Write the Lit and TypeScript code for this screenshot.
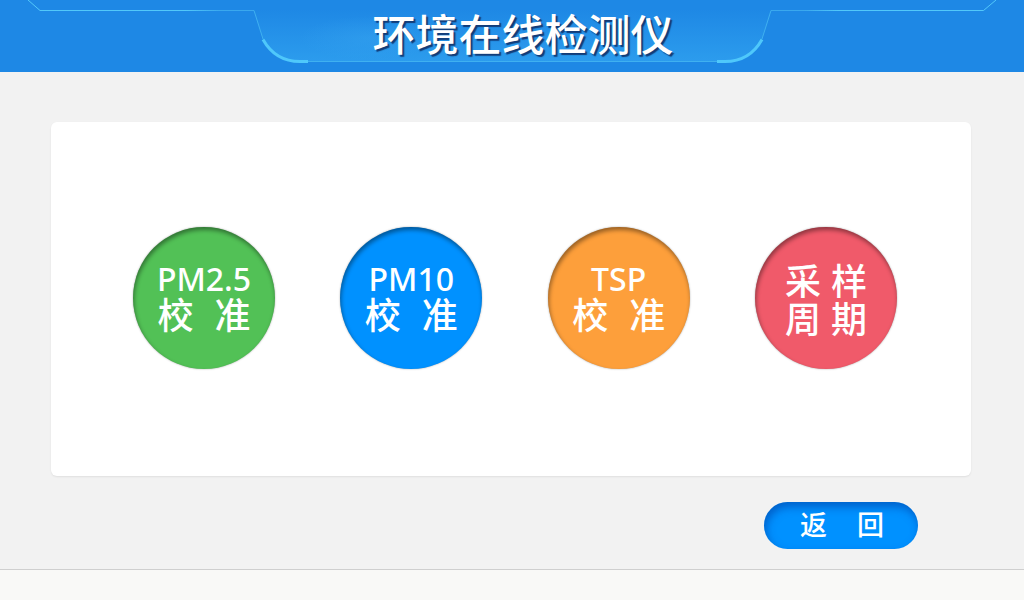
import { LitElement, html, css } from "lit";
import { customElement, property } from "lit/decorators.js";

interface Action {
  tone: string;
  label?: string;
  rows: string[];
}

const ACTIONS: Action[] = [
  { tone: "green", label: "PM2.5", rows: ["校准"] },
  { tone: "blue", label: "PM10", rows: ["校准"] },
  { tone: "orange", label: "TSP", rows: ["校准"] },
  { tone: "red", rows: ["采样", "周期"] },
];

@customElement("header-banner")
class HeaderBanner extends LitElement {
  static styles = css`
    :host {
      display: block;
    }
    .banner {
      display: grid;
      height: 72px;
      background: #1e88e5;
      overflow: hidden;
    }
    .frame,
    .title {
      grid-area: 1 / 1;
    }
    .frame {
      width: 100%;
      height: 72px;
    }
    .title {
      margin: 0;
      padding-left: 22px;
      justify-self: center;
      font-size: 43px;
      line-height: 64px;
      font-weight: 500;
      color: #fff;
      text-shadow: 2px 2px 1px #123c78;
      white-space: nowrap;
    }
  `;

  render() {
    return html`
      <header class="banner">
        <svg class="frame" viewBox="0 0 1024 72" preserveAspectRatio="xMidYMin slice" fill="none" aria-hidden="true">
          <defs>
            <linearGradient id="fill" x1="0" y1="0" x2="0" y2="1">
              <stop offset="0.15" stop-color="#1e88e5" />
              <stop offset="1" stop-color="#2c9ced" />
            </linearGradient>
            <radialGradient id="glow">
              <stop offset="0" stop-color="#38a6f0" stop-opacity="0.4" />
              <stop offset="1" stop-color="#38a6f0" stop-opacity="0" />
            </radialGradient>
            <linearGradient id="left" gradientUnits="userSpaceOnUse" x1="28" y1="0" x2="254" y2="0">
              <stop offset="0.7" stop-color="#52c8fa" />
              <stop offset="0.85" stop-color="#3aa8ee" />
            </linearGradient>
            <linearGradient id="right" gradientUnits="userSpaceOnUse" x1="996" y1="0" x2="771" y2="0">
              <stop offset="0.7" stop-color="#52c8fa" />
              <stop offset="0.85" stop-color="#3aa8ee" />
            </linearGradient>
          </defs>
          <path fill="url(#fill)" d="M251 0L254 10.500L263 39C270 52 282 61.500 300 61.500H725C743 61.500 755 52 762 39L771 10.500L774 0Z" />
          <ellipse cx="370" cy="38" rx="70" ry="22" fill="url(#glow)" />
          <path stroke="url(#left)" d="M28 0L40 10.500H254" />
          <path stroke="url(#right)" d="M996 0L983.500 10.500H771" />
          <path stroke="#3fb0f0" d="M254 10.500L263 39M308 61.500H717M762 39L771 10.500" />
          <path stroke="#4fc8fb" stroke-width="3" d="M263 39.500C270 52 282 61.500 300 61.500H308M717 61.500H725C743 61.500 755 52 762 39.500" />
        </svg>
        <h1 class="title">环境在线检测仪</h1>
      </header>
    `;
  }
}

@customElement("round-button")
class RoundButton extends LitElement {
  @property({ attribute: false }) action!: Action;

  static styles = css`
    :host {
      display: block;
    }
    .round {
      display: flex;
      flex-direction: column;
      align-items: center;
      justify-content: center;
      width: 142px;
      height: 142px;
      padding: 0;
      border: 0;
      border-radius: 50%;
      color: #fff;
      font-family: "Noto Sans", "Noto Sans CJK SC", sans-serif;
      font-weight: 500;
      cursor: pointer;
      box-shadow: inset 1px 3px 4px rgba(0, 0, 0, 0.4), 0 0 2px rgba(0, 0, 0, 0.35);
    }
    .green {
      background: #52c156;
    }
    .blue {
      background: #0091ff;
    }
    .orange {
      background: #fd9f3b;
    }
    .red {
      background: #f05a6a;
    }
    .label {
      font-size: 32px;
      line-height: 30px;
    }
    .row {
      display: flex;
      gap: 21px;
      font-family: "Noto Sans CJK SC", sans-serif;
      font-size: 36px;
      line-height: 38px;
      font-weight: 500;
    }
    .red .row {
      gap: 10px;
    }
  `;

  render() {
    const { tone, label, rows } = this.action;
    return html`
      <button class="round ${tone}" type="button">
        ${label ? html`<span class="label">${label}</span>` : null}
        ${rows.map(
          (row) => html`<span class="row">${[...row].map((c) => html`<span>${c}</span>`)}</span>`
        )}
      </button>
    `;
  }
}

@customElement("app-root")
class AppRoot extends LitElement {
  static styles = css`
    :host {
      display: flex;
      flex-direction: column;
      min-height: 100vh;
      background: #f2f2f2;
      font-family: "Noto Sans CJK SC", sans-serif;
    }
    .main {
      flex: 1;
      display: flex;
      flex-direction: column;
      padding: 50px 53px 20px 51px;
    }
    .panel {
      flex: 1;
      display: flex;
      flex-wrap: wrap;
      align-items: center;
      justify-content: space-between;
      gap: 24px;
      padding: 24px 74px 26px 82px;
      background: #fff;
      border-radius: 6px;
      box-shadow: 0 1px 2px rgba(0, 0, 0, 0.08);
    }
    .actions {
      display: flex;
      justify-content: flex-end;
      padding: 26px 53px 0 0;
    }
    .back {
      display: flex;
      align-items: center;
      justify-content: center;
      gap: 30px;
      width: 154px;
      height: 47px;
      padding: 0 0 3px 2px;
      border: 0;
      border-radius: 24px;
      background: #0091ff;
      color: #fff;
      font-family: inherit;
      font-size: 27px;
      line-height: 40px;
      font-weight: 500;
      cursor: pointer;
      box-shadow: inset 2px 5px 8px rgba(0, 50, 150, 0.5);
    }
    .footer {
      height: 30px;
      border-top: 1px solid #cfcfcf;
      background: #f9f9f7;
    }
  `;

  render() {
    return html`
      <header-banner></header-banner>
      <main class="main">
        <section class="panel">
          ${ACTIONS.map((a) => html`<round-button .action=${a}></round-button>`)}
        </section>
        <div class="actions">
          <button class="back" type="button"><span>返</span><span>回</span></button>
        </div>
      </main>
      <footer class="footer"></footer>
    `;
  }
}
